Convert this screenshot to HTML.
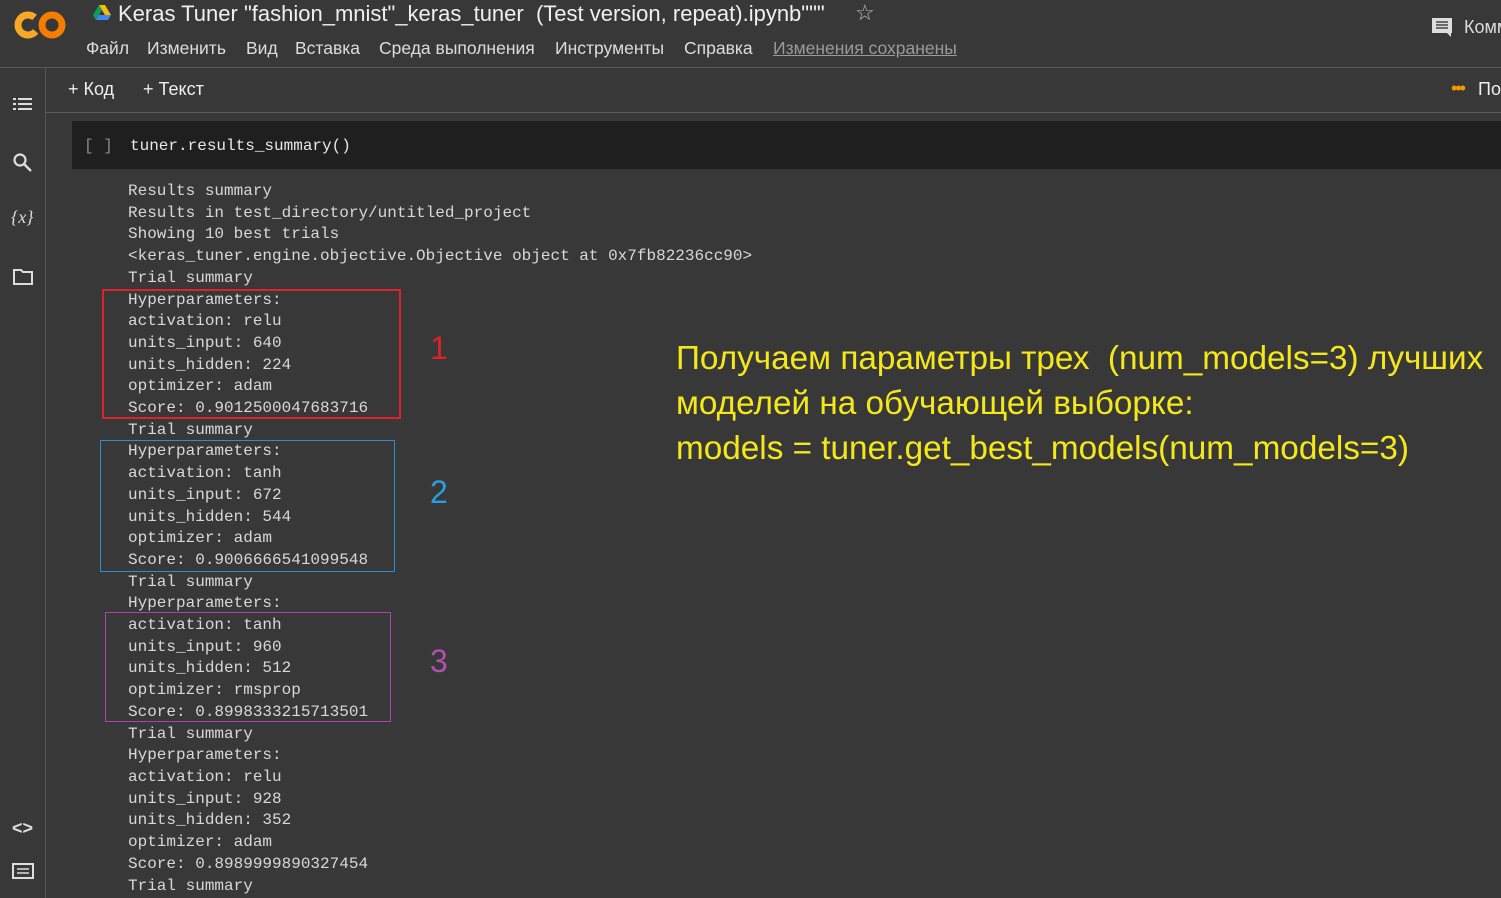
<!DOCTYPE html>
<html><head><meta charset="utf-8"><style>
body{margin:0;width:1501px;height:898px;background:#383838;overflow:hidden;font-family:"Liberation Sans",sans-serif;color:#e3e3e3;position:relative}
.a{position:absolute;white-space:nowrap}
.m{position:absolute;top:38px;font-size:17.5px;color:#ddd;white-space:nowrap}
.mono{font-family:"Liberation Mono",monospace;font-size:16px}
.out{position:absolute;left:128px;top:181px;line-height:21.7px;color:#d8d8d8;white-space:pre}
.box{position:absolute;border:2px solid}
</style></head><body>
<svg class="a" style="left:14px;top:8px" width="54" height="34" viewBox="0 0 54 34"><circle cx="14" cy="17" r="10" fill="none" stroke="#f9a825" stroke-width="7" stroke-dasharray="47 20" transform="rotate(40 14 17)"/><circle cx="38" cy="17" r="10" fill="none" stroke="#f57c00" stroke-width="7"/></svg>
<svg class="a" style="left:92px;top:4px" width="20" height="18" viewBox="0 0 20 18"><path d="M7 1h6l6 10h-6z" fill="#fbbc04"/><path d="M7 1L1 11l3 5 6-10z" fill="#0f9d58"/><path d="M4 16h12l3-5H7z" fill="#4285f4"/></svg>
<div class="a" style="left:118px;top:1px;font-size:22px;color:#f0f0f0">Keras Tuner "fashion_mnist"_keras_tuner&nbsp; (Test version, repeat).ipynb"""</div>
<div class="a" style="left:855px;top:0px;font-size:22px;color:#bbb">☆</div>
<div class="m" style="left:86px">Файл</div>
<div class="m" style="left:147px">Изменить</div>
<div class="m" style="left:246px">Вид</div>
<div class="m" style="left:295px">Вставка</div>
<div class="m" style="left:379px">Среда выполнения</div>
<div class="m" style="left:555px">Инструменты</div>
<div class="m" style="left:684px">Справка</div>
<div class="m" style="left:773px;color:#9a9a9a;text-decoration:underline">Изменения сохранены</div>
<svg class="a" style="left:1431px;top:17px" width="22" height="20" viewBox="0 0 22 20"><path d="M1 1h20v15h-1v4l-4-4H1z" fill="#ddd"/><path d="M5 5h12M5 8h12M5 11h12" stroke="#444" stroke-width="1.6"/></svg>
<div class="a" style="left:1464px;top:17px;font-size:18px;color:#ddd">Комм</div>
<div class="a" style="left:0;top:67px;width:1501px;height:1px;background:#5a5a5a"></div>
<div class="a" style="left:45px;top:68px;width:1px;height:830px;background:#555"></div>
<div class="a" style="left:46px;top:112px;width:1455px;height:1px;background:#5a5a5a"></div>
<div class="a" style="left:68px;top:79px;font-size:18px;color:#eee">+ Код</div>
<div class="a" style="left:143px;top:79px;font-size:18px;color:#eee">+ Текст</div>
<div class="a" style="left:1451px;top:78px;font-size:18px;color:#f29900;letter-spacing:-2px">•••</div>
<div class="a" style="left:1478px;top:79px;font-size:18px;color:#eee">По</div>
<svg class="a" style="left:12px;top:95px" width="22" height="18" viewBox="0 0 22 18" fill="#ddd"><rect x="1" y="3" width="3" height="2"/><rect x="1" y="8" width="3" height="2"/><rect x="1" y="13" width="3" height="2"/><rect x="6" y="3" width="14" height="2"/><rect x="6" y="8" width="14" height="2"/><rect x="6" y="13" width="14" height="2"/></svg>
<svg class="a" style="left:12px;top:152px" width="22" height="22" viewBox="0 0 22 22"><circle cx="8" cy="8" r="5.5" fill="none" stroke="#ddd" stroke-width="2.2"/><path d="M12 12l7 7" stroke="#ddd" stroke-width="2.5"/></svg>
<div class="a" style="left:11px;top:207px;font-size:18px;color:#ddd;font-family:'Liberation Serif',serif;font-style:italic">{<i>x</i>}</div>
<svg class="a" style="left:12px;top:268px" width="22" height="18" viewBox="0 0 22 18"><path d="M2 2h7l2 2h9v12H2z" fill="none" stroke="#ddd" stroke-width="2"/></svg>
<div class="a" style="left:12px;top:818px;font-size:18px;color:#ddd;font-weight:bold">&lt;&gt;</div>
<svg class="a" style="left:12px;top:862px" width="22" height="18" viewBox="0 0 22 18"><rect x="1" y="2" width="20" height="14" fill="none" stroke="#ddd" stroke-width="2"/><path d="M5 7h12M5 11h12" stroke="#ddd" stroke-width="1.6"/></svg>
<div class="a" style="left:72px;top:121px;width:1429px;height:48px;background:#1f1f1f"></div>
<div class="a mono" style="left:84px;top:137px;color:#888">[ ]</div>
<div class="a mono" style="left:130px;top:137px;color:#e8e8e8">tuner.results_summary()</div>
<div class="out mono">Results summary
Results in test_directory/untitled_project
Showing 10 best trials
&lt;keras_tuner.engine.objective.Objective object at 0x7fb82236cc90&gt;
Trial summary
Hyperparameters:
activation: relu
units_input: 640
units_hidden: 224
optimizer: adam
Score: 0.9012500047683716
Trial summary
Hyperparameters:
activation: tanh
units_input: 672
units_hidden: 544
optimizer: adam
Score: 0.9006666541099548
Trial summary
Hyperparameters:
activation: tanh
units_input: 960
units_hidden: 512
optimizer: rmsprop
Score: 0.8998333215713501
Trial summary
Hyperparameters:
activation: relu
units_input: 928
units_hidden: 352
optimizer: adam
Score: 0.8989999890327454
Trial summary</div>
<div class="box" style="left:102px;top:289px;width:295px;height:126px;border-color:#e0202a"></div>
<div class="box" style="left:100px;top:440px;width:293px;height:130px;border-color:#2a8fcf;border-width:1px"></div>
<div class="box" style="left:105px;top:612px;width:284px;height:108px;border-color:#b040b0;border-width:1px"></div>
<div class="a" style="left:430px;top:330px;font-size:32px;color:#e0202a">1</div>
<div class="a" style="left:430px;top:474px;font-size:32px;color:#2a9fdf">2</div>
<div class="a" style="left:430px;top:643px;font-size:32px;color:#b050b0">3</div>
<div class="a" style="left:676px;top:336px;font-size:33.3px;line-height:45px;color:#f5e81a">Получаем параметры трех&nbsp; (num_models=3) лучших<br>моделей на обучающей выборке:<br>models = tuner.get_best_models(num_models=3)</div>
</body></html>
